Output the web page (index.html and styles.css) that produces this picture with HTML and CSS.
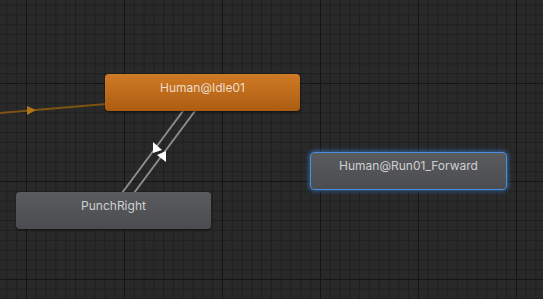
FILE: index.html
```html
<!DOCTYPE html>
<html lang="en">
<head>
  <meta charset="UTF-8">
  <title>Animator</title>
  <link rel="stylesheet" href="styles.css">
</head>
<body>
  <!-- graph canvas -->
  <div class="graph">
    <svg class="links" width="543" height="299" viewBox="0 0 543 299">
      <!-- entry transition -->
      <line x1="0" y1="113" x2="106" y2="104" class="entry-line"/>
      <polygon points="27,106 27,115 36,110" class="entry-arrow"/>
      <!-- Idle <-> PunchRight -->
      <line x1="183" y1="111" x2="122" y2="193" class="trans-line"/>
      <line x1="195" y1="111" x2="134" y2="193" class="trans-line"/>
      <polygon points="153,142 153,153 162,150" class="trans-arrow"/>
      <polygon points="166,151 166,162 157,155" class="trans-arrow"/>
    </svg>

    <div class="node node-default" style="left:105px;top:74px;">Human@Idle01</div>
    <div class="node" style="left:16px;top:192px;">PunchRight</div>
    <div class="node node-selected" style="left:310px;top:152px;">Human@Run01_Forward</div>
  </div>
</body>
</html>
```
FILE: styles.css
```css
* {
  margin: 0;
  padding: 0;
  box-sizing: border-box;
}

body {
  background-color: #282828;
  font-family: Inter, "Noto Sans", sans-serif;
}

/*grid background*/
.graph {
  position: relative;
  width: 543px;
  height: 299px;
  overflow: hidden;
  background-color: #292929;
  background-image:
    linear-gradient(to right, #151515 1px, transparent 1px),
    linear-gradient(to bottom, #151515 1px, transparent 1px),
    linear-gradient(to right, #1f1f1f 1px, transparent 1px),
    linear-gradient(to bottom, #1f1f1f 1px, transparent 1px);
  background-size: 98px 98px, 98px 98px, 9.8px 9.8px, 9.8px 9.8px;
  background-position: 26px 83px;
}

.links {
  position: absolute;
  left: 0;
  top: 0;
}

.entry-line {
  stroke: #7d5312;
  stroke-width: 2;
}

.entry-arrow {
  fill: #b07616;
}

.trans-line {
  stroke: #8c8c8c;
  stroke-width: 2;
}

.trans-arrow {
  fill: #ffffff;
}

/*state nodes*/
.node {
  position: absolute;
  width: 195px;
  height: 37px;
  padding-top: 6px;
  border-radius: 4px;
  background: linear-gradient(to bottom, #595b5f, #4a4c50);
  box-shadow: 0 1px 2px rgba(0, 0, 0, 0.6);
  color: #d0d0d0;
  font-size: 12px;
  text-align: center;
}

.node-default {
  background: linear-gradient(to bottom, #cf7a25, #ac5d12);
  color: #eedccb;
}

.node-selected {
  width: 197px;
  height: 38px;
  padding-top: 5px;
  border: 1px solid #4a8edb;
  box-shadow: 0 0 4px 1px rgba(58, 121, 200, 0.75);
}
```
